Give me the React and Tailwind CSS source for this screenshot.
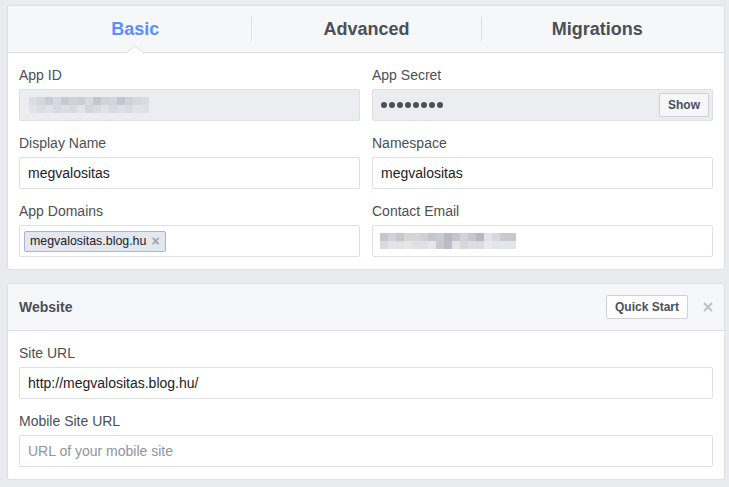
import React from "react";

const appIdBlur = [
  ["#dcdee3", "#d4d7dd", "#c9cdd6", "#d6d9df", "#c5cad4", "#cfd2d9", "#c9ced8", "#d7d9de", "#c3c8d2", "#d1d4da", "#d3d6dc", "#c1c6d0", "#cfd2d9", "#d5d8de", "#dadce1"],
  ["#e1e3e7", "#dbdde2", "#e0e2e6", "#d6d9de", "#dcdee3", "#d8dbe0", "#e2e4e8", "#d2d5db", "#dadce1", "#e0e2e6", "#d7dadf", "#dde0e4", "#d9dbe0", "#e2e4e7", "#dfe1e5"],
];

const emailBlur = [
  ["#c8c4ca", "#d2d2d6", "#c5c8ce", "#d3d7dc", "#d9d5d3", "#cfd1d6", "#bfc7cf", "#c9cbd1", "#b7bac4", "#c3c5cc", "#d2d3d7", "#c6c6cc", "#bdb5bc", "#dde3e7", "#d6d8dc", "#c9cace", "#c6c8cd"],
  ["#dddadd", "#e4e4e7", "#e1e2e5", "#e6e7e9", "#e0e0e2", "#dfe1e4", "#e6e7ea", "#c8c8cf", "#babcc6", "#e2e3e6", "#dad7db", "#e0dde0", "#dcdcdf", "#e6eaec", "#e3e4e7", "#e6e6e9", "#e4e5e7"],
];

function Blur({ rows }) {
  return (
    <div className="flex flex-col">
      {rows.map((row, i) => (
        <div key={i} className="flex">
          {row.map((c, j) => (
            <div key={j} className="w-[8px] h-[8px]" style={{ backgroundColor: c }} />
          ))}
        </div>
      ))}
    </div>
  );
}

function Field({ label, children }) {
  return (
    <div className="flex flex-col">
      <div className="h-[20px] leading-[20px] text-[14px] text-[#4b4f56] mb-[4px]">{label}</div>
      {children}
    </div>
  );
}

function Input({ value, placeholder }) {
  return (
    <div className="h-[32px] border border-[#dddfe2] rounded-[2px] bg-white px-[8px] flex items-center text-[14px]">
      {value ? (
        <span className="text-[#1d2129]">{value}</span>
      ) : (
        <span className="text-[#90949c]">{placeholder}</span>
      )}
    </div>
  );
}

const App = () => {
  return (
    <div
      className="min-h-screen bg-[#e9ebee] pt-[5px] pl-[7px]"
      style={{ fontFamily: '"Liberation Sans", Arial, sans-serif' }}
    >
      <div className="w-[718px] bg-white border border-[#dddfe2] rounded-[3px]">
        <div className="relative h-[47px] bg-[#f6f7f9] border-b border-[#dddfe2] px-[12px] grid grid-cols-3 items-center rounded-t-[3px]">
          <div className="relative h-full flex items-center justify-center text-[18px] font-bold text-[#5890ff]">
            Basic
            <svg className="absolute bottom-[-1px] left-1/2 -translate-x-1/2" width="16" height="8" viewBox="0 0 16 8">
              <path d="M0 8 L8 0.5 L16 8 Z" fill="#ffffff" />
              <path d="M0 7.5 L8 0.5 L16 7.5" fill="none" stroke="#dddfe2" strokeWidth="1" />
            </svg>
          </div>
          <div className="h-[24px] border-l border-[#dddfe2] flex items-center justify-center text-[18px] font-bold text-[#4b4f56]">
            Advanced
          </div>
          <div className="h-[24px] border-l border-[#dddfe2] flex items-center justify-center text-[18px] font-bold text-[#4b4f56]">
            Migrations
          </div>
        </div>

        <div className="px-[11px] pt-[12px] pb-[12px] grid grid-cols-2 gap-x-[12px] gap-y-[12px]">
          <Field label="App ID">
            <div className="h-[32px] border border-[#dddfe2] rounded-[2px] bg-[#ebedf0] pl-[9px] flex items-center">
              <Blur rows={appIdBlur} />
            </div>
          </Field>
          <Field label="App Secret">
            <div className="h-[32px] border border-[#dddfe2] rounded-[2px] bg-[#ebedf0] pl-[8px] pr-[3px] flex items-center justify-between">
              <div className="flex gap-[2px]">
                {[0, 1, 2, 3, 4, 5, 6, 7].map((i) => (
                  <div key={i} className="w-[6px] h-[6px] rounded-full bg-[#4b4f56]" />
                ))}
              </div>
              <button className="h-[24px] px-[8px] border border-[#ced0d4] rounded-[2px] bg-[#f6f7f9] text-[12px] font-bold text-[#4b4f56]">
                Show
              </button>
            </div>
          </Field>
          <Field label="Display Name">
            <Input value="megvalositas" />
          </Field>
          <Field label="Namespace">
            <Input value="megvalositas" />
          </Field>
          <Field label="App Domains">
            <div className="h-[32px] border border-[#dddfe2] rounded-[2px] bg-white px-[4px] flex items-center">
              <span className="h-[21px] px-[5px] flex items-center border border-[#aab5cc] rounded-[2px] bg-[#e2e7f0] text-[12.4px] text-[#1d2129]">
                megvalositas.blog.hu
                <span className="ml-[5px] text-[14px] font-bold text-[#9da3ad]">×</span>
              </span>
            </div>
          </Field>
          <Field label="Contact Email">
            <div className="h-[32px] border border-[#dddfe2] rounded-[2px] bg-white pl-[7px] flex items-center">
              <Blur rows={emailBlur} />
            </div>
          </Field>
        </div>
      </div>

      <div className="w-[718px] mt-[13px] bg-white border border-[#dddfe2] rounded-[3px]">
        <div className="h-[47px] bg-[#f6f7f9] border-b border-[#dddfe2] px-[11px] flex items-center justify-between rounded-t-[3px]">
          <span className="text-[14px] font-bold text-[#4b4f56]">Website</span>
          <div className="flex items-center">
            <button className="h-[24px] px-[8px] border border-[#ced0d4] rounded-[2px] bg-white text-[12px] font-bold text-[#4b4f56]">
              Quick Start
            </button>
            <svg className="ml-[15px]" width="10" height="10" viewBox="0 0 10 10">
              <path d="M1 1 L9 9 M9 1 L1 9" stroke="#bec2c9" strokeWidth="2.2" strokeLinecap="butt" />
            </svg>
          </div>
        </div>
        <div className="px-[11px] pt-[12px] pb-[12px] flex flex-col gap-[12px]">
          <Field label="Site URL">
            <Input value="http://megvalositas.blog.hu/" />
          </Field>
          <Field label="Mobile Site URL">
            <Input placeholder="URL of your mobile site" />
          </Field>
        </div>
      </div>
    </div>
  );
};

export default App;
